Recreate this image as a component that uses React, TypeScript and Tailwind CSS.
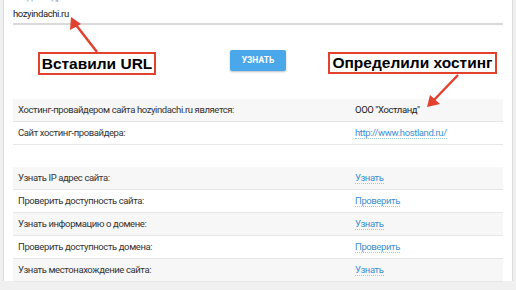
import React from 'react';

const rows = [
  { label: 'Узнать IP адрес сайта:', action: 'Узнать' },
  { label: 'Проверить доступность сайта:', action: 'Проверить' },
  { label: 'Узнать информацию о домене:', action: 'Узнать' },
  { label: 'Проверить доступность домена:', action: 'Проверить' },
  { label: 'Узнать местонахождение сайта:', action: 'Узнать' },
];

function Row({ label, children, shade }: { label: string; children?: React.ReactNode; shade?: boolean }) {
  return (
    <div className={`flex h-[23px] items-center border-b border-[#e6e6e6] ${shade ? 'bg-[#f7f7f7]' : 'bg-white'}`}>
      <div className="w-[342px] pl-[5px] text-[#333]">{label}</div>
      <div className="flex-1">{children}</div>
    </div>
  );
}

function Link({ children }: { children: React.ReactNode }) {
  return <span className="border-b border-dotted border-[#9cc7ea] leading-[12px] text-[#3b8fd4]">{children}</span>;
}

export default function App() {
  return (
    <div className="relative h-[290px] w-[516px] overflow-hidden bg-[#f0f0f0] px-[3px] font-['Roboto',sans-serif] text-[9.5px] tracking-[-0.4px]">
      <div className="h-full border-x border-[#dcdcdc] bg-white px-[9px]">
        {/* поле ввода */}
        <div className="-mt-[9px] text-[9px] leading-[12px] text-[#9a9a9a]">Введите адрес сайта</div>
        <div className="mt-[5px] text-[9.5px] leading-[12px] text-[#222]">hozyindachi.ru</div>
        <div className="mt-[3px] h-[2px] bg-[#d9d9d9]" />

        <div className="mt-[25px] flex justify-center">
          <button className="h-[21px] w-[56px] rounded-[2px] bg-[#4aa8ea] text-[8.5px] font-bold tracking-normal text-white shadow-[0_1px_2px_rgba(0,0,0,0.25)]">
            УЗНАТЬ
          </button>
        </div>

        {/* таблица */}
        <div className="mt-[28px]">
          <Row label="Хостинг-провайдером сайта hozyindachi.ru является:" shade>
            <span className="text-[#222]">ООО "Хостланд"</span>
          </Row>
          <Row label="Сайт хостинг-провайдера:">
            <Link>http://www.hostland.ru/</Link>
          </Row>
          <div className="h-[22px]" />
          {rows.map((r, i) => (
            <Row key={i} label={r.label} shade={i % 2 === 0}>
              <Link>{r.action}</Link>
            </Row>
          ))}
        </div>
      </div>

      {/* аннотации */}
      <div className="absolute left-[38px] top-[52px] flex h-[23px] w-[118px] items-center justify-center border-2 border-[#e2412e] bg-white font-['Liberation_Sans',Arial,sans-serif] text-[15.5px] font-bold tracking-normal text-black">
        Вставили URL
      </div>
      <div className="absolute left-[328px] top-[52px] flex h-[22px] w-[169px] items-center justify-center border-2 border-[#e2412e] bg-white font-['Liberation_Sans',Arial,sans-serif] text-[15.5px] font-bold tracking-normal text-black">
        Определили хостинг
      </div>
      <svg className="pointer-events-none absolute left-0 top-0" width="516" height="290">
        <line x1="97" y1="52" x2="76" y2="25" stroke="#e2412e" strokeWidth="2.5" />
        <polygon points="71,17 70,30 81,24" fill="#e2412e" />
        <line x1="458" y1="75" x2="434" y2="100" stroke="#e2412e" strokeWidth="2.5" />
        <polygon points="427,107 430,95 440,104" fill="#e2412e" />
      </svg>
    </div>
  );
}
